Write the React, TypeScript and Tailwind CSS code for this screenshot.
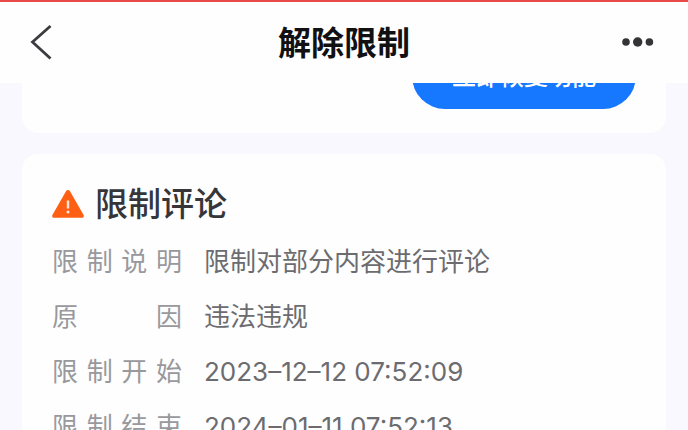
const details = [
  { label: "限制说明", value: "限制对部分内容进行评论" },
  { label: "原因", value: "违法违规" },
  { label: "限制开始", value: "2023–12–12 07:52:09" },
  { label: "限制结束", value: "2024–01–11 07:52:13" },
];

const Header = () => {
  return (
    <header className="relative z-10 flex h-[83px] shrink-0 items-center justify-between border-t-2 border-[#ea4b48] bg-[#fefefe] px-7">
      <button type="button" aria-label="返回" className="flex w-10 text-[#3c3c40]">
        <svg width="26" height="40" viewBox="0 0 26 40" fill="none">
          <path d="M22.5 3L4.5 19l18 16.5" stroke="currentColor" strokeWidth="2.8" />
        </svg>
      </button>
      <h1 className="text-[33px] leading-10 font-bold text-[#111113]">解除限制</h1>
      <button type="button" aria-label="更多" className="flex w-10 justify-end pr-1 text-[#343437]">
        <svg width="36" height="12" viewBox="0 0 36 12" fill="currentColor" className="shrink-0">
          <circle cx="6" cy="5" r="3.8" />
          <circle cx="17.7" cy="5" r="4.7" />
          <circle cx="29.4" cy="5" r="3.8" />
        </svg>
      </button>
    </header>
  );
};

const WarningIcon = () => {
  return (
    <svg width="32" height="28" viewBox="0 0 32 28" className="shrink-0">
      <path
        d="M14 1.2a2.3 2.3 0 0 1 4 0l13.6 23.8a1.9 1.9 0 0 1-1.7 2.8H2.1A1.9 1.9 0 0 1 .4 25z"
        fill="#ff5f15"
      />
      <path d="M16 10.5v8" stroke="#ffe9dc" strokeWidth="2.4" />
      <circle cx="16" cy="22" r="1.5" fill="#ffe9dc" />
    </svg>
  );
};

const App = () => {
  return (
    <div className="flex h-screen flex-col overflow-hidden bg-[#f8f8fe] font-['Inter','Noto_Sans_CJK_SC',sans-serif]">
      <Header />
      <main className="-mt-16 flex flex-col gap-[21px] px-[22px]">
        {/* scrolled part way under the header */}
        <section className="flex justify-end rounded-2xl bg-[#fefefe] px-[30px] pt-6 pb-6">
          <button
            type="button"
            className="h-[66px] w-[224px] rounded-full bg-[#1677ff] pt-0.5 text-2xl font-medium text-white"
          >
            立即恢复功能
          </button>
        </section>

        <section className="rounded-2xl bg-[#fefefe] px-[30px] pt-7">
          <h2 className="flex items-center gap-[11px] text-[33px] leading-[44px] font-medium text-[#36363a]">
            <WarningIcon />
            限制评论
          </h2>
          <dl className="mt-2 text-[26px] leading-[55px]">
            {details.map(({ label, value }) => (
              <div key={label} className="flex gap-[22px]">
                <dt className="flex w-[130px] shrink-0 justify-between text-[#99999d]">
                  {[...label].map((char) => (
                    <span key={char}>{char}</span>
                  ))}
                </dt>
                <dd className="whitespace-nowrap text-[#6c6c70]">{value}</dd>
              </div>
            ))}
          </dl>
        </section>
      </main>
    </div>
  );
};

export default App;
